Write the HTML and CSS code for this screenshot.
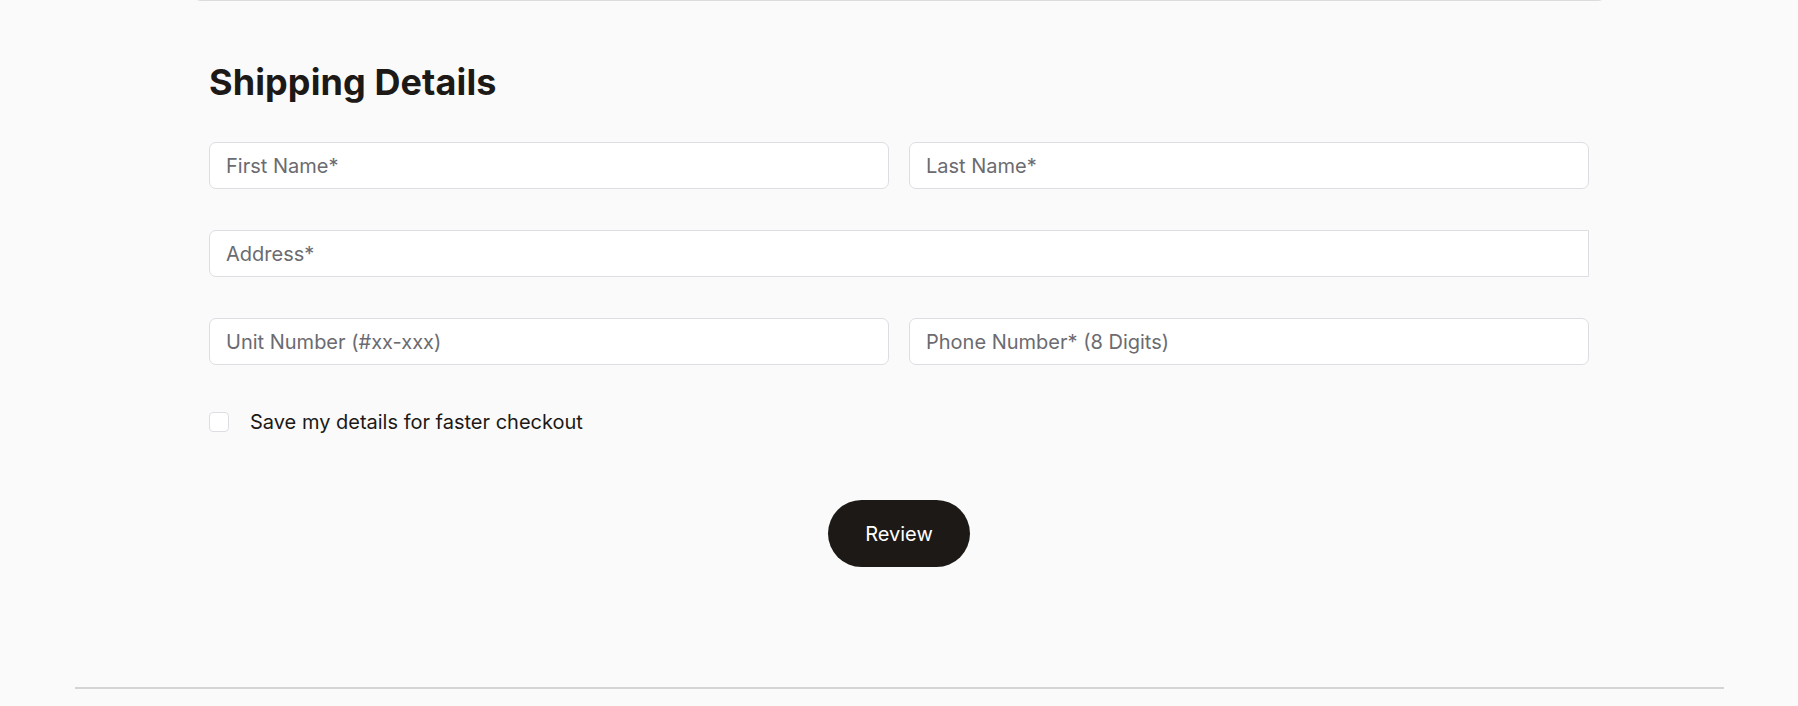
FILE: index.html
```html
<!DOCTYPE html>
<html lang="en">
<head>
<meta charset="utf-8">
<title>Shipping Details</title>
<link rel="stylesheet" href="styles.css">
</head>
<body>
<div class="prev-card"></div>
<main class="shipping">
  <h2 class="shipping-title">Shipping Details</h2>
  <form class="shipping-form">
    <div class="row two">
      <input class="field" type="text" placeholder="First Name*">
      <input class="field" type="text" placeholder="Last Name*">
    </div>
    <div class="row">
      <input class="field address" type="text" placeholder="Address*">
    </div>
    <div class="row two">
      <input class="field" type="text" placeholder="Unit Number (#xx-xxx)">
      <input class="field" type="text" placeholder="Phone Number* (8 Digits)">
    </div>
    <label class="save">
      <span class="box"></span>
      <span class="save-text">Save my details for faster checkout</span>
    </label>
    <div class="actions">
      <button type="button" class="review">Review</button>
    </div>
  </form>
</main>
<footer class="footer">
  <hr class="footer-line">
</footer>
</body>
</html>
```
FILE: styles.css
```css
* { box-sizing: border-box; }
html, body {
  margin: 0;
  padding: 0;
  background: #fafafa;
  font-family: Inter, "Noto Sans", sans-serif;
  color: #1c1917;
}
.prev-card {
  width: 1413px;
  height: 8px;
  margin: -7px auto 0;
  background: #fafafa;
  border: 1px solid #dcdcdc;
  border-top: none;
  border-radius: 0 0 8px 8px;
}
.shipping {
  width: 1380px;
  margin: 0 auto;
}
.shipping-title {
  margin: 59px 0 0;
  font-size: 36px;
  line-height: 44px;
  font-weight: 700;
  letter-spacing: 0.1px;
  color: #1c1917;
}
.shipping-form {
  margin-top: 38px;
  display: flex;
  flex-direction: column;
}
.row {
  display: flex;
  gap: 20px;
  margin-bottom: 41px;
}
.row .field { flex: 1 1 0; min-width: 0; }
.field {
  height: 47px;
  padding: 0 16px;
  border: 1px solid #dedde3;
  border-radius: 7px;
  background: #fff;
  font-family: Inter, "Noto Sans", sans-serif;
  font-size: 20px;
  color: #1c1917;
  outline: none;
}
.field.address {
  border-radius: 7px 0 0 7px;
}
.field::placeholder { color: #6b6b70; }
.save {
  display: flex;
  align-items: center;
  gap: 21px;
  margin-top: 6px;
  height: 20px;
}
.box {
  width: 20px;
  height: 20px;
  border: 1px solid #dedde3;
  border-radius: 4px;
  background: #fff;
}
.save-text {
  font-size: 20px;
  color: #1c1917;
}
.actions {
  display: flex;
  justify-content: center;
  margin-top: 68px;
}
.review {
  width: 142px;
  height: 67px;
  border: none;
  border-radius: 34px;
  background: #1c1917;
  color: #fff;
  font-family: Inter, "Noto Sans", sans-serif;
  font-size: 20px;
  font-weight: 400;
}
.footer {
  width: 1649px;
  margin: 120px auto 0;
}
.footer-line {
  margin: 0;
  border: none;
  border-top: 2px solid #d4d4d4;
}
```
